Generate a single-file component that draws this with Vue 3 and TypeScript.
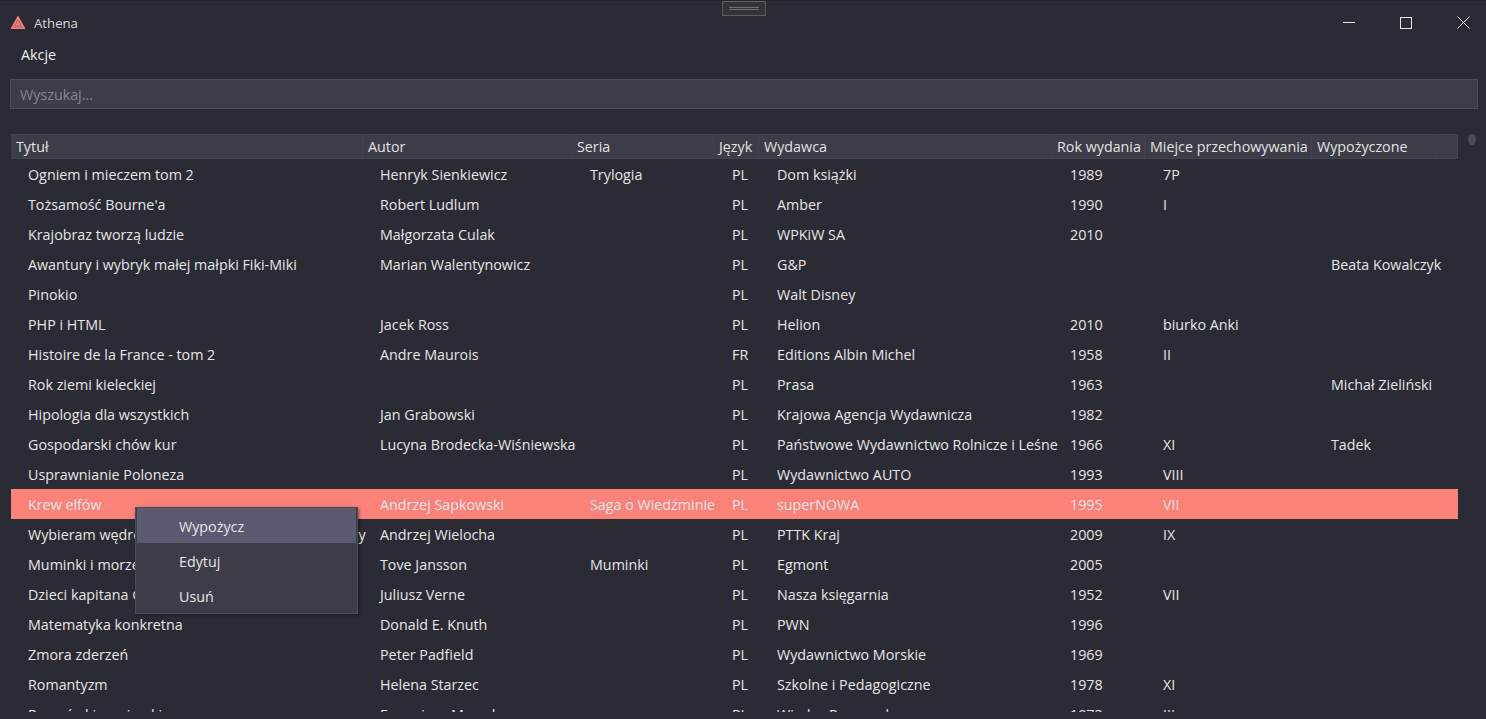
<template>
  <div class="window">
    <header class="titlebar">
      <svg class="logo" width="16" height="15" viewBox="0 0 16 15">
        <path d="M8 .6 15.2 13.2Q15.4 14 14.6 14H1.4Q.6 14 .8 13.2Z" fill="#f5827b" />
        <path d="M8 4.8 11.4 10.9H4.6Z" fill="none" stroke="#b05a56" stroke-width="1" />
        <path d="M2.6 12.4H13.2" stroke="#bd625e" stroke-width="0.7" />
      </svg>
      <span class="app-name">Athena</span>
      <div class="grip"><i /><i /></div>
      <div class="controls">
        <svg width="12" height="12" viewBox="0 0 12 12">
          <path d="M0 5.5H12" stroke="#e8e8e8" />
        </svg>
        <svg width="12" height="12" viewBox="0 0 12 12">
          <rect x="0.5" y="0.5" width="11" height="11" fill="none" stroke="#e8e8e8" />
        </svg>
        <svg width="13" height="13" viewBox="0 0 13 13">
          <path d="M.5.5 12.5 12.5M12.5.5.5 12.5" stroke="#e8e8e8" />
        </svg>
      </div>
    </header>

    <nav class="menubar"><span>Akcje</span></nav>

    <div class="search">
      <input type="text" placeholder="Wyszukaj..." />
    </div>

    <section class="table-wrap">
      <div class="table">
        <div class="head">
          <div v-for="col in columns" :key="col" class="head-cell">{{ col }}</div>
          <div class="head-cell" />
        </div>
        <div
          v-for="(book, i) in books"
          :key="i"
          class="row"
          :class="{ selected: i === selectedRow }"
        >
          <div v-for="(value, j) in book" :key="j" class="cell">{{ value }}</div>
        </div>
      </div>
      <div class="scroll-thumb" />

      <ul class="context-menu">
        <li
          v-for="(item, i) in menuItems"
          :key="item"
          :class="{ hover: i === 0 }"
        >
          {{ item }}
        </li>
      </ul>
    </section>
  </div>
</template>

<script setup lang="ts">
const columns: string[] = [
  "Tytuł",
  "Autor",
  "Seria",
  "Język",
  "Wydawca",
  "Rok wydania",
  "Miejce przechowywania",
  "Wypożyczone",
];

const menuItems: string[] = ["Wypożycz", "Edytuj", "Usuń"];
const selectedRow = 11;

const books: string[][] = [
  ["Ogniem i mieczem tom 2", "Henryk Sienkiewicz", "Trylogia", "PL", "Dom książki", "1989", "7P", ""],
  ["Tożsamość Bourne'a", "Robert Ludlum", "", "PL", "Amber", "1990", "I", ""],
  ["Krajobraz tworzą ludzie", "Małgorzata Culak", "", "PL", "WPKiW SA", "2010", "", ""],
  ["Awantury i wybryk małej małpki Fiki-Miki", "Marian Walentynowicz", "", "PL", "G&P", "", "", "Beata Kowalczyk"],
  ["Pinokio", "", "", "PL", "Walt Disney", "", "", ""],
  ["PHP i HTML", "Jacek Ross", "", "PL", "Helion", "2010", "biurko Anki", ""],
  ["Histoire de la France - tom 2", "Andre Maurois", "", "FR", "Editions Albin Michel", "1958", "II", ""],
  ["Rok ziemi kieleckiej", "", "", "PL", "Prasa", "1963", "", "Michał Zieliński"],
  ["Hipologia dla wszystkich", "Jan Grabowski", "", "PL", "Krajowa Agencja Wydawnicza", "1982", "", ""],
  ["Gospodarski chów kur", "Lucyna Brodecka-Wiśniewska", "", "PL", "Państwowe Wydawnictwo Rolnicze i Leśne", "1966", "XI", "Tadek"],
  ["Usprawnianie Poloneza", "", "", "PL", "Wydawnictwo AUTO", "1993", "VIII", ""],
  ["Krew elfów", "Andrzej Sapkowski", "Saga o Wiedźminie", "PL", "superNOWA", "1995", "VII", ""],
  ["Wybieram wędrowanie czyli górskie abc dla turysty", "Andrzej Wielocha", "", "PL", "PTTK Kraj", "2009", "IX", ""],
  ["Muminki i morze", "Tove Jansson", "Muminki", "PL", "Egmont", "2005", "", ""],
  ["Dzieci kapitana Granta", "Juliusz Verne", "", "PL", "Nasza księgarnia", "1952", "VII", ""],
  ["Matematyka konkretna", "Donald E. Knuth", "", "PL", "PWN", "1996", "", ""],
  ["Zmora zderzeń", "Peter Padfield", "", "PL", "Wydawnictwo Morskie", "1969", "", ""],
  ["Romantyzm", "Helena Starzec", "", "PL", "Szkolne i Pedagogiczne", "1978", "XI", ""],
  ["Rozmówki węgierskie", "Eugeniusz Mroczko", "", "PL", "Wiedza Powszechna", "1973", "III", ""],
];
</script>

<style>
html,
body {
  margin: 0;
  background: #2b2b35;
  overflow: hidden;
}
</style>

<style scoped>
.window {
  height: 719px;
  overflow: hidden;
  background: #2b2b35;
  color: #e6e6e6;
  font-family: "Open Sans", "Noto Sans", sans-serif;
  font-size: 14.3px;
  display: flex;
  flex-direction: column;
  border-top: 1px solid #24242c;
  box-sizing: border-box;
}

.titlebar {
  position: relative;
  height: 42px;
  flex: none;
  display: flex;
  align-items: center;
  padding-left: 10px;
  gap: 8px;
  font-size: 13.2px;
  color: #d8d8d8;
}

.app-name {
  padding-top: 2px;
}

.grip {
  position: absolute;
  left: 722px;
  top: 0;
  width: 44px;
  height: 15px;
  border: 1px solid #5e5e62;
  box-sizing: border-box;
  background: #333338;
  display: flex;
  flex-direction: column;
  align-items: center;
  justify-content: center;
  gap: 1px;
}

.grip i {
  display: block;
  width: 30px;
  height: 1px;
  background: #6e6e72;
}

.controls {
  position: absolute;
  right: 16px;
  top: 15px;
  display: flex;
  align-items: center;
  gap: 45px;
}

.controls svg {
  display: block;
}

.menubar {
  height: 22px;
  flex: none;
  padding: 0 0 2px 21px;
  display: flex;
  align-items: center;
  color: #f0f0f0;
}

.search {
  margin: 12px 8px 0 10px;
  flex: none;
}

.search input {
  display: block;
  width: 100%;
  height: 30px;
  box-sizing: border-box;
  background: #3d3c49;
  border: 1px solid #4c4b5c;
  padding: 0 9px;
  color: #e6e6e6;
  font: inherit;
  outline: none;
}

.search input::placeholder {
  color: #85858d;
  opacity: 1;
}

.table-wrap {
  position: relative;
  margin: 25px 0 0 11px;
  height: 578px;
  overflow: hidden;
  flex: none;
}

.table {
  width: 1447px;
}

.head,
.row {
  display: grid;
}

.head {
  grid-template-columns: 352px 209px 142px 45px 293px 93px 167px 124px 22px;
  height: 25px;
  background: #3d3c49;
  box-sizing: border-box;
  border-top: 1px solid #434251;
  border-bottom: 1px solid #434251;
}

.head-cell {
  box-sizing: border-box;
  padding-left: 5px;
  line-height: 24px;
  white-space: nowrap;
  border-right: 1px solid #434251;
  color: #e2e2e2;
}

.row {
  grid-template-columns: 352px 210px 142px 45px 293px 93px 168px 1fr;
  height: 30px;
  line-height: 32px;
}

.cell {
  padding-left: 17px;
  white-space: nowrap;
  min-width: 0;
}

.row.selected {
  background: #fa8279;
}

.scroll-thumb {
  position: absolute;
  left: 1457px;
  top: 0;
  width: 8px;
  height: 11px;
  border-radius: 50%;
  background: #4b4b5e;
}

.context-menu {
  position: absolute;
  left: 124px;
  top: 373px;
  width: 223px;
  margin: 0;
  padding: 0 1px;
  box-sizing: border-box;
  list-style: none;
  background: #3d3c49;
  border: 1px solid #4c4b5c;
  box-shadow: 1px 1px 3px rgba(0, 0, 0, 0.45);
}

.context-menu li {
  height: 35px;
  line-height: 37px;
  padding-left: 42px;
}

.context-menu li.hover {
  background: #5a5a70;
}
</style>
